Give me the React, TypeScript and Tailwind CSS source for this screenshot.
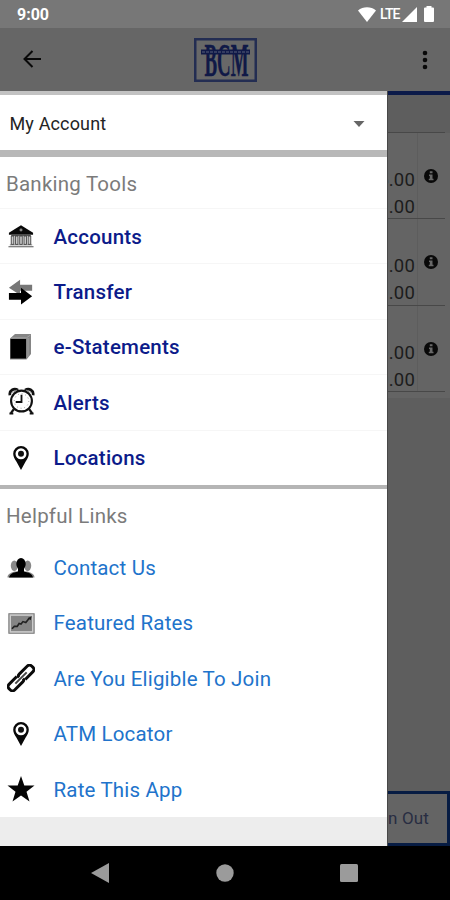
import type { ReactNode } from "react";

const BankIcon = () => (
  <svg width="26" height="25" viewBox="0 0 28 26">
    <path d="M1 9 14 1l13 8v2H1z" fill="#080808" />
    <circle cx="14" cy="6" r="1.6" fill="#888" />
    <path d="M3.5 11h21v1.5h-21z" fill="#555" />
    <g fill="#c8c8c8" stroke="#333" strokeWidth=".9">
      <path d="M3.500 12.500h2.800v9H3.500zM8 12.500h2.800v9H8zM12.600 12.500h2.800v9h-2.800zM17.200 12.500H20v9h-2.800zM21.700 12.500h2.800v9h-2.800z" />
    </g>
    <path d="M2 21.500h24v1H2zM.5 23.500h27v1.200H.5z" fill="#555" />
  </svg>
);

const TransferIcon = () => (
  <svg width="26" height="28" viewBox="0 0 28 28">
    <path d="M1 9.500 13 .8v5.400h13v6.500H13v4.500z" fill="#777" />
    <path d="M1 15h13V9.500l12 9L14 27.500v-5.200H1z" fill="#000" />
  </svg>
);

const BookIcon = () => (
  <svg width="28" height="28" viewBox="0 0 28 28">
    <path d="M3 5.500 8 1h16v20l-4.500 5.500H3z" fill="#858585" />
    <path d="M3.500 6H19v19.500H3.500z" fill="#000" />
    <path d="M4.500 4.800h15L23.500 2M21 5v19" fill="none" stroke="#aaa" strokeWidth=".8" />
  </svg>
);

const AlarmIcon = () => (
  <svg width="27" height="29" viewBox="0 0 28 30" fill="none" stroke="#111" className="mb-[2px]">
    <circle cx="14" cy="14.500" r="10.800" strokeWidth="2.200" />
    <path d="M2 8.500C1 3.500 6 .8 10.500 3.200M17.500 3.200C22 .8 27 3.500 26 8.500" strokeWidth="2.800" />
    <path d="m4.500 6 5-3M23.500 6l-5-3" stroke="#888" />
    <path d="M6 23 3 27M22 23l3 4" strokeWidth="2.300" />
    <path d="M1.500 27.500h4M22.500 27.500h4" strokeWidth="2" />
    <path d="M14 8v7.500H8" strokeWidth="1.900" />
    <circle cx="14" cy="14.500" r="7.500" stroke="#777" strokeWidth="1" strokeDasharray=".8 3.127" />
  </svg>
);

const PinIcon = () => (
  <svg width="28" height="26" viewBox="0 0 28 26">
    <path fillRule="evenodd" d="M14 1a7.800 7.800 0 0 0-7.800 7.800c0 3 1.500 5.200 3.300 8L14 25l4.500-8.200c1.800-2.800 3.300-5 3.300-8A7.800 7.800 0 0 0 14 1Zm0 2.300a5.500 5.500 0 1 1 0 11 5.500 5.500 0 0 1 0-11Z" fill="#080808" />
    <circle cx="14" cy="8.800" r="3" fill="#111" />
  </svg>
);

const PeopleIcon = () => (
  <svg width="28" height="22" viewBox="0 0 28 22">
    <g fill="#888">
      <ellipse cx="7.300" cy="8.800" rx="3.500" ry="5.200" />
      <ellipse cx="20.700" cy="8.800" rx="3.500" ry="5.200" />
      <path d="M.5 20.500c0-3.500 3-4.500 7-6h13c4 1.500 7 2.500 7 6z" />
    </g>
    <ellipse cx="14" cy="7" rx="4.700" ry="6" fill="#000" />
    <path d="M11 11h6v3.500c5 1.200 8 2 9 6H2c1-4 4-4.800 9-6z" fill="#000" />
  </svg>
);

const ChartIcon = () => (
  <svg width="27" height="21" viewBox="0 0 28 22">
    <path d="M.8.800h26.400v20.400H.800z" fill="#ccc" stroke="#777" strokeWidth="1.200" />
    <path d="M3 3h22v16H3z" fill="#858585" />
    <path d="m4 16.500 2.500-2.500h3l2-3 2 .5 2-2.500 3 1 4-5" fill="none" stroke="#222" strokeWidth="1.700" />
    <path d="m20.500 5.500 4-2-.8 4z" fill="#222" />
  </svg>
);

const LinkIcon = () => (
  <svg width="28" height="28" viewBox="0 0 28 28" className="shrink-0">
    <g transform="rotate(-45 14 14)" fill="none" stroke="#0a0a0a" strokeWidth="2.900">
      <path d="M12 10H1a3 3 0 0 0-3 3v2a3 3 0 0 0 3 3h11.500q2.500 0 2.500-2.200" />
      <path d="M16 18h11a3 3 0 0 0 3-3v-2a3 3 0 0 0-3-3H15.500q-2.500 0-2.500 2.200" />
      <path d="M6 14h16" stroke="#444" strokeWidth="2" />
    </g>
  </svg>
);

const StarIcon = () => (
  <svg width="28" height="26" viewBox="0 0 28 26">
    <path d="m14 0 3.300 9.500H27.500l-8 6.200 3 9.800-8.500-6-8.500 6 3-9.800-8-6.200h10.200z" fill="#050505" />
  </svg>
);

const tools: [string, ReactNode][] = [
  ["Accounts", <BankIcon />],
  ["Transfer", <TransferIcon />],
  ["e-Statements", <BookIcon />],
  ["Alerts", <AlarmIcon />],
  ["Locations", <PinIcon />],
];

const links: [string, ReactNode][] = [
  ["Contact Us", <PeopleIcon />],
  ["Featured Rates", <ChartIcon />],
  ["Are You Eligible To Join", <LinkIcon />],
  ["ATM Locator", <PinIcon />],
  ["Rate This App", <StarIcon />],
];

const InfoIcon = () => (
  <svg width="14" height="14" viewBox="0 0 14 14" className="shrink-0">
    <circle cx="7" cy="7" r="7" fill="#090909" />
    <path d="M5.800 2.300h2.700v2H5.800zM5 5.500h3.500v4.300h1v1.500H4.800V9.800h1V7H5z" fill="#686868" />
  </svg>
);

function Balance({ top }: { top: string }) {
  return (
    <div className="mr-[5px] flex h-[86.300px] border-b border-[#484848] text-[18.500px] leading-[27px] tracking-[0.200px] text-[#1c1c1c]">
      <div className="flex w-[30px] flex-col items-end border-r border-[#5d5d5d] pt-[34px] pr-[2px]">
        <span>{top}</span>
        <span>0.00</span>
      </div>
      <div className="flex w-[26px] justify-center pt-[36px]">
        <InfoIcon />
      </div>
    </div>
  );
}

export default function App() {
  return (
    <div className="flex h-[900px] w-[450px] flex-col overflow-hidden bg-[#646464] font-['Roboto',sans-serif]">
      <div className="flex h-[28px] shrink-0 items-center justify-between bg-[#777] pr-[16px] pl-[17px] text-white">
        <span className="pt-[2px] text-[16px] leading-[26px] font-bold">9:00</span>
        <div className="flex items-center">
          <svg width="18" height="15" viewBox="0 0 18 15"><path d="M0 3.500C5-.9 13-.9 18 3.500L9 15z" fill="#fff" /></svg>
          <span className="ml-[4px] w-[20px] text-[14px] leading-[28px] font-medium tracking-[-0.900px]">LTE</span>
          <svg width="15" height="15" viewBox="0 0 15 15" className="ml-[2px]"><path d="M15 0v15H0z" fill="#fff" /></svg>
          <svg width="10" height="16" viewBox="0 0 10 16" className="ml-[7px]"><path d="M2.500 0h5v1.500h1.500q1 0 1 1V15q0 1-1 1H1q-1 0-1-1V2.500q0-1 1-1h1.500z" fill="#fff" /></svg>
        </div>
      </div>

      <div className="flex h-[63px] shrink-0 items-center bg-[#666] pr-[22px] pl-[23px]">
        <svg width="19" height="18" viewBox="0 0 19 18" fill="none" stroke="#090909" strokeWidth="2" className="mb-px"><path d="M18 9H1.500M9.500 1l-8 8 8 8" /></svg>
        <svg width="63" height="44" viewBox="0 0 63 44" className="ml-[152px] overflow-visible">
          <rect x="1.250" y="1.250" width="60.500" height="41.500" fill="#686868" stroke="#232d52" strokeWidth="2.500" />
          <text x="10.500" y="38" textLength="44" lengthAdjust="spacingAndGlyphs" fontFamily="Liberation Serif, serif" fontWeight="700" fontSize="47" fill="#101947" stroke="#101947" strokeWidth=".4">BCM</text>
          <path d="M7 11.500h49v5H7z" fill="#101947" />
          <path d="M8 14h47" stroke="#59617d" strokeWidth="1" strokeDasharray="3 1" />
        </svg>
        <svg width="6" height="20" viewBox="0 0 6 20" fill="#090909" className="ml-auto"><circle cx="3" cy="3" r="2.300" /><circle cx="3" cy="10" r="2.300" /><circle cx="3" cy="17" r="2.300" /></svg>
      </div>

      <div className="flex h-[755px] shrink-0">
        <aside className="flex w-[387px] shrink-0 flex-col bg-white">
          <div className="h-[4px] shrink-0 bg-[#c2c2c2]" />
          <div className="flex h-[55px] shrink-0 items-center justify-between pr-[22px] pl-[9.500px]">
            <span className="pt-[2px] text-[18px] tracking-[0.150px] text-[#242424]">My Account</span>
            <svg width="12" height="6" viewBox="0 0 12 6" className="mt-[2px]"><path d="M.5 0h11L6 6z" fill="#666" /></svg>
          </div>
          <div className="h-[7px] shrink-0 bg-[#b8b8b8]" />
          <h2 className="flex h-[51px] shrink-0 items-center pt-[4px] pl-[6px] text-[20.500px] tracking-[0.220px] text-[#7b7b7b]">Banking Tools</h2>
          {tools.map(([label, icon]) => (
            <div key={label} className="flex h-[55.400px] shrink-0 items-center border-t border-[#f6f6f6]">
              <div className="flex w-[42px] shrink-0 justify-center"><div className="flex w-[28px] items-center justify-center">{icon}</div></div>
              <span className="ml-[11.500px] pt-[1.500px] text-[20.500px] font-medium tracking-[0.220px] text-[#0c1b8a]">{label}</span>
            </div>
          ))}
          <div className="h-[4px] shrink-0 bg-[#b5b5b5]" />
          <h2 className="flex h-[51px] shrink-0 items-center pt-[4px] pl-[6px] text-[20.500px] tracking-[0.220px] text-[#7b7b7b]">Helpful Links</h2>
          {links.map(([label, icon]) => (
            <div key={label} className="flex h-[55.400px] shrink-0 items-center">
              <div className="flex w-[42px] shrink-0 justify-center"><div className="flex w-[28px] items-center justify-center">{icon}</div></div>
              <span className="ml-[11.500px] pt-[1.500px] text-[20.500px] tracking-[0.180px] text-[#2173cb]">{label}</span>
            </div>
          ))}
          <div className="flex-1 bg-[#ededed]" />
        </aside>

        <main className="flex w-[63px] shrink-0 flex-col overflow-hidden border-l border-[#484848] bg-[#5e5e5e]">
          <div className="h-[4px] shrink-0 bg-[#0b1a49]" />
          <div className="mr-[5px] h-[38px] shrink-0 border-b border-[#484848]" />
          <div className="shrink-0 bg-[#646464]">
            <Balance top="5.00" />
            <Balance top="0.00" />
            <Balance top="0.00" />
            <div className="h-[6px]" />
          </div>
          <div className="flex-1" />
          <div className="flex h-[55px] shrink-0 items-center justify-end border-3 border-l-0 border-[#071c43] bg-[#646464] pr-[18px] text-[17px] tracking-[0.150px] whitespace-nowrap text-[#282d42]">Sign Out</div>
        </main>
      </div>

      <div className="flex flex-1 items-center justify-between bg-black pr-[92px] pl-[91px]">
        <svg width="18" height="20" viewBox="0 0 18 20"><path d="M18 0v20L0 10z" fill="#9b9b9b" /></svg>
        <svg width="18" height="18" viewBox="0 0 18 18"><circle cx="9" cy="9" r="8.700" fill="#9b9b9b" /></svg>
        <svg width="18" height="18" viewBox="0 0 18 18"><rect width="18" height="18" rx="1.500" fill="#9b9b9b" /></svg>
      </div>
    </div>
  );
}
